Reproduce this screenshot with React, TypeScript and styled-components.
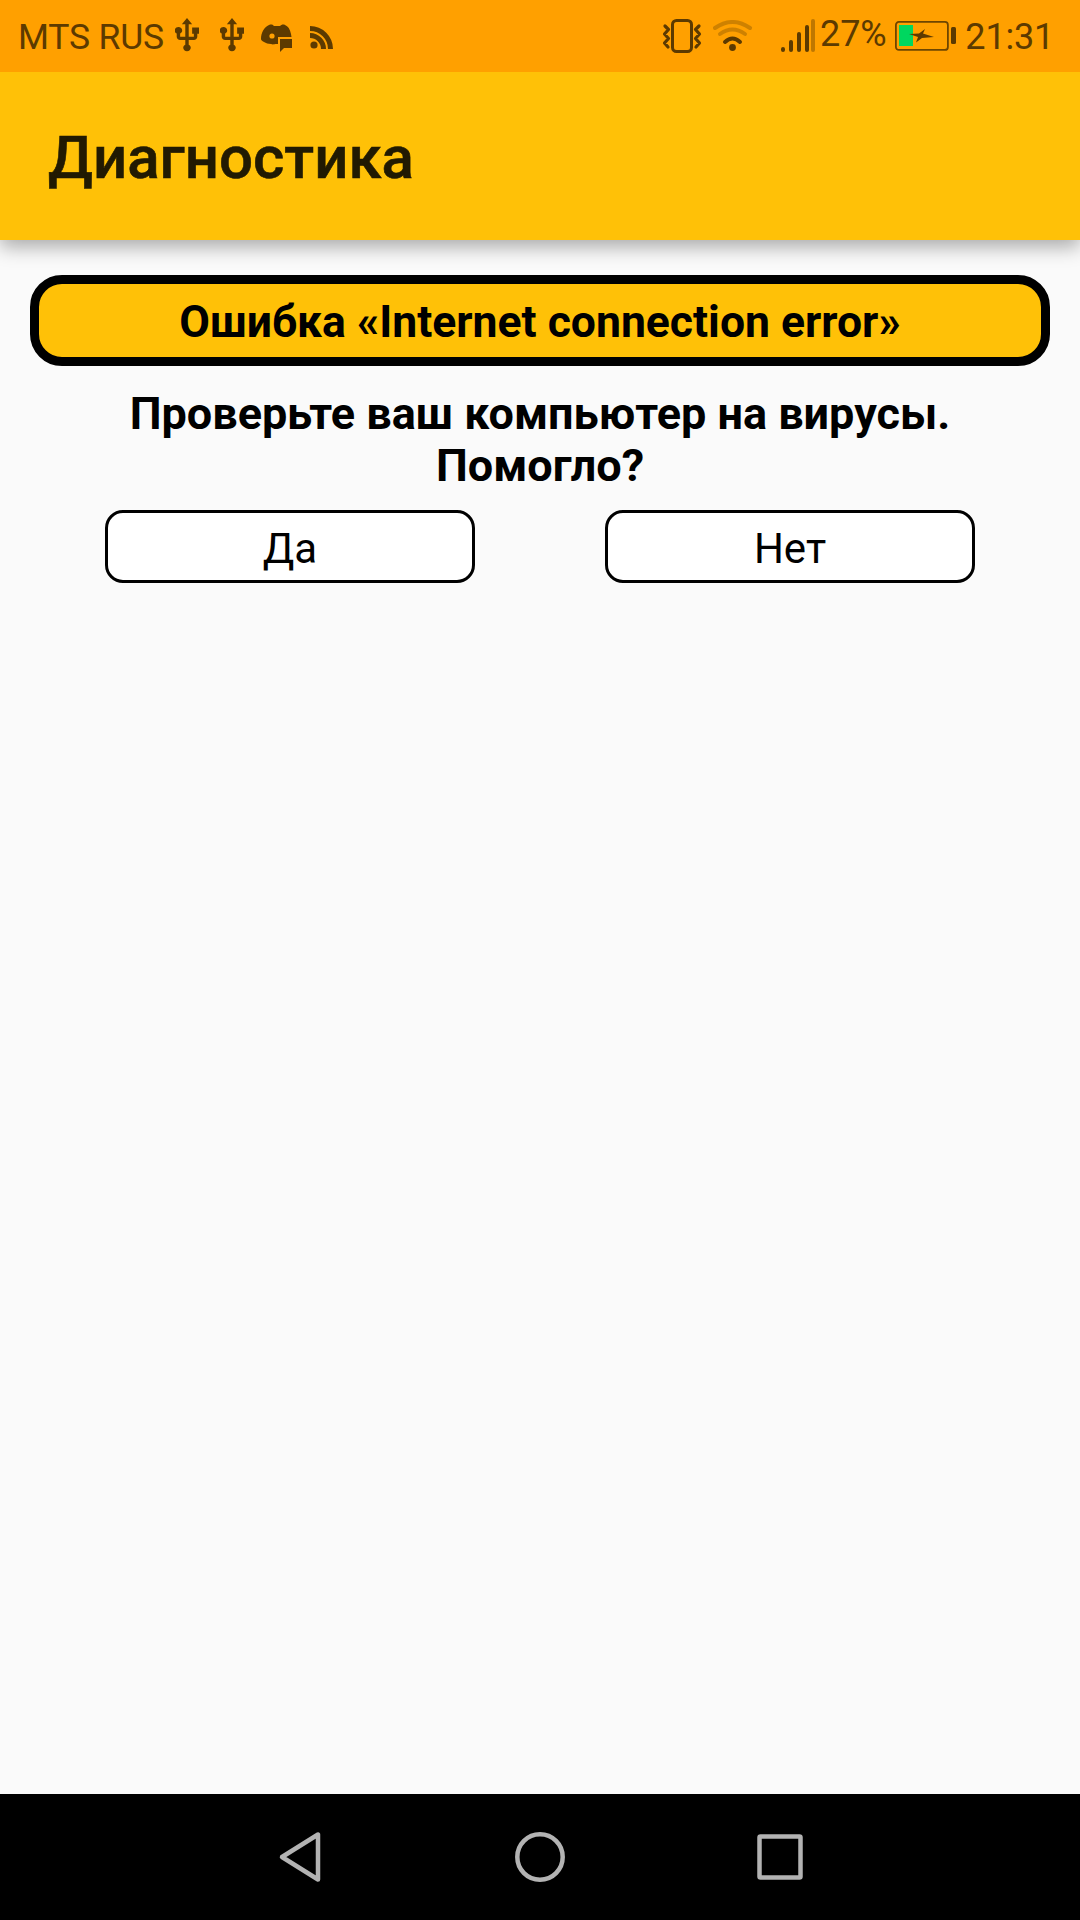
import React from "react";
import styled, { createGlobalStyle } from "styled-components";

const Global = createGlobalStyle`
  html, body { margin: 0; padding: 0; background: #fafafa; }
  #root { width: 1080px; height: 1920px; }
`;

const Screen = styled.div`
  width: 1080px;
  height: 1920px;
  display: flex;
  flex-direction: column;
  background: #fafafa;
  font-family: Roboto, "Liberation Sans", sans-serif;
  overflow: hidden;
`;

const StatusBar = styled.div`
  height: 72px;
  flex: none;
  background: #ffa000;
  display: flex;
  align-items: center;
  justify-content: space-between;
  padding: 0 26px 0 18px;
  color: #5c3a00;
  position: relative;
  z-index: 1;
`;

const StatusGroup = styled.div`
  display: flex;
  align-items: center;
`;

const StatusText = styled.span<{ $ml?: number; $mt?: number; $size?: number }>`
  font-size: ${(p) => p.$size ?? 35.5}px;
  line-height: 40px;
  letter-spacing: -0.2px;
  margin-left: ${(p) => p.$ml ?? 0}px;
  margin-top: ${(p) => p.$mt ?? 0}px;
`;

const StatusIcon = styled.svg<{ $ml: number; $mt?: number }>`
  display: block;
  flex: none;
  margin-left: ${(p) => p.$ml}px;
  margin-top: ${(p) => p.$mt ?? 0}px;
`;

const AppBar = styled.header`
  height: 168px;
  flex: none;
  box-sizing: border-box;
  background: #ffc107;
  display: flex;
  align-items: center;
  padding: 3px 0 0 48px;
  box-shadow: 0 7px 18px rgba(0, 0, 0, 0.32);
  position: relative;
`;

const Title = styled.h1`
  margin: 0;
  font-size: 60px;
  font-weight: 500;
  color: #211a02;
  -webkit-text-stroke: 0.6px #211a02;
`;

const Content = styled.main`
  flex: 1;
  display: flex;
  flex-direction: column;
  align-items: center;
  padding: 35px 30px 0;
`;

const Banner = styled.div`
  width: 100%;
  box-sizing: border-box;
  height: 91px;
  padding-top: 3px;
  border: 9px solid #000;
  border-radius: 32px;
  background: #ffc107;
  display: flex;
  align-items: center;
  justify-content: center;
  font-size: 44.5px;
  font-weight: 700;
  color: #000;
`;

const Question = styled.p`
  margin: 22px 0 0;
  text-align: center;
  font-size: 45px;
  line-height: 52px;
  font-weight: 700;
  color: #000;
`;

const Answers = styled.div`
  display: flex;
  justify-content: center;
  gap: 130px;
  margin-top: 18px;
`;

const Answer = styled.button`
  width: 370px;
  height: 73px;
  box-sizing: border-box;
  border: 3px solid #000;
  border-radius: 18px;
  background: #fff;
  font-family: inherit;
  font-size: 42px;
  color: #000;
  padding: 3px 0 0;
`;

const NavBar = styled.nav`
  height: 126px;
  flex: none;
  background: #000;
  display: flex;
  align-items: center;
  padding: 0 0 0 277px;
`;

const NavIcon = styled.svg<{ $ml?: number }>`
  display: block;
  margin-left: ${(p) => p.$ml ?? 0}px;
`;

const Usb = ({ ml }: { ml: number }) => (
  <StatusIcon $ml={ml} width="24" height="36" viewBox="5 1 14 23" preserveAspectRatio="none" fill="#5c3a00">
    <path d="M15 7v4h1v2h-3V5h2l-3-4-3 4h2v8H8v-2.07c.7-.37 1.2-1.08 1.2-1.93 0-1.21-.99-2.2-2.2-2.2-1.21 0-2.2.99-2.2 2.2 0 .85.5 1.56 1.2 1.93V13c0 1.11.89 2 2 2h3v3.05c-.71.37-1.2 1.1-1.2 1.95 0 1.22.99 2.2 2.2 2.2 1.21 0 2.2-.98 2.2-2.2 0-.85-.49-1.58-1.2-1.95V15h3c1.11 0 2-.89 2-2v-2h1V7h-4z" />
  </StatusIcon>
);

export default function App() {
  return (
    <Screen>
      <Global />
      <StatusBar>
        <StatusGroup>
          <StatusText $mt={2}>MTS RUS</StatusText>
          <Usb ml={11} />
          <Usb ml={21} />
          <StatusIcon $ml={17} $mt={4} width="32" height="28" viewBox="0 0 32 28" fill="#5c3a00">
            <path d="M8 1c3-1 4 0 5 1h6c1-1 3-2 5-1 3 1 5 4 6 9l1 6c-1 1-2 1-3 1h-9v3h-4c-1 0-3 1-5 0-3 0-5-1-7-2-2-1-3-2-3-3 0-6 3-12 8-14z" />
            <circle cx="11" cy="12" r="2.6" fill="#ffa000" />
            <rect x="18" y="14" width="14" height="11" fill="#5c3a00" stroke="#ffa000" strokeWidth="2" />
            <path d="M19 24h4l-4 4z" />
          </StatusIcon>
          <StatusIcon $ml={17} $mt={2} width="24" height="23" viewBox="0 0 24 23" fill="none" stroke="#5c3a00">
            <circle cx="4" cy="19" r="3.6" fill="#5c3a00" stroke="none" />
            <path d="M0 9.5a13.5 13.5 0 0 1 13.5 13.5" strokeWidth="5" />
            <path d="M0 2.5a20.5 20.5 0 0 1 20.5 20.5" strokeWidth="5" />
          </StatusIcon>
        </StatusGroup>
        <StatusGroup>
          <StatusIcon $ml={0} width="42" height="34" viewBox="0 0 42 34" fill="none" stroke="#5c3a00" strokeLinecap="round" strokeLinejoin="round">
            <rect x="11.5" y="1.5" width="19" height="31" rx="4" strokeWidth="3" />
            <path d="M4 7l3.5 3.5-4 4.5 4 4.5-4 4.5 3.5 4M38 7l-3.5 3.5 4 4.5-4 4.5 4 4.5-3.5 4" strokeWidth="3.2" />
          </StatusIcon>
          <StatusIcon $ml={10} width="40" height="33" viewBox="0 0 40 33" fill="none" strokeLinecap="round">
            <path d="M2 8Q19.5 -4 37 8" stroke="#5c3a00" strokeOpacity=".3" strokeWidth="4" />
            <path d="M7 14Q19.5 5 32 14" stroke="#5c3a00" strokeOpacity=".3" strokeWidth="4" />
            <path d="M12 22Q19.5 15 27 22" stroke="#5c3a00" strokeWidth="4" />
            <circle cx="19.5" cy="27.5" r="3.4" fill="#5c3a00" />
          </StatusIcon>
          <StatusIcon $ml={27} width="35" height="34" viewBox="0 0 35 34" fill="none" strokeLinecap="round" strokeWidth="4">
            <path d="M3 31v-1M11 31v-8M19 31V15M27 31V8" stroke="#5c3a00" />
            <path d="M33 31V2" stroke="#5c3a00" strokeOpacity=".4" />
          </StatusIcon>
          <StatusText $ml={5} $mt={-4} $size={36}>27%</StatusText>
          <StatusIcon $ml={9} width="62" height="30" viewBox="0 0 62 30">
            <rect x=".9" y=".9" width="52" height="28" rx="3" fill="none" stroke="#6e4600" strokeWidth="1.8" />
            <rect x="4" y="4" width="14" height="21" fill="#00d75f" />
            <rect x="56" y="6" width="5" height="17" rx="1.5" fill="#5c3a00" />
            <path d="M14 13l10-.5L30 8l-2 4.5L39 16l-12 1-6 4.5 2-5.5z" fill="#5c3a00" />
          </StatusIcon>
          <StatusText $ml={8} $mt={2} $size={36}>21:31</StatusText>
        </StatusGroup>
      </StatusBar>
      <AppBar>
        <Title>Диагностика</Title>
      </AppBar>
      <Content>
        <Banner>Ошибка «Internet connection error»</Banner>
        <Question>
          Проверьте ваш компьютер на вирусы.
          <br />
          Помогло?
        </Question>
        <Answers>
          <Answer>Да</Answer>
          <Answer>Нет</Answer>
        </Answers>
      </Content>
      <NavBar>
        <NavIcon width="44" height="54" viewBox="0 0 44 54" fill="none" stroke="#b3b3b3" strokeWidth="4.5" strokeLinejoin="round">
          <path d="M41 4.5v45L5 27z" />
        </NavIcon>
        <NavIcon $ml={194} width="50" height="50" viewBox="0 0 50 50" fill="none" stroke="#b3b3b3" strokeWidth="4.5">
          <circle cx="25" cy="25" r="22.7" />
        </NavIcon>
        <NavIcon $ml={192} width="46" height="46" viewBox="0 0 46 46" fill="none" stroke="#b3b3b3" strokeWidth="4.5" strokeLinejoin="round">
          <rect x="2.5" y="2.5" width="41" height="41" rx="1" />
        </NavIcon>
      </NavBar>
    </Screen>
  );
}
